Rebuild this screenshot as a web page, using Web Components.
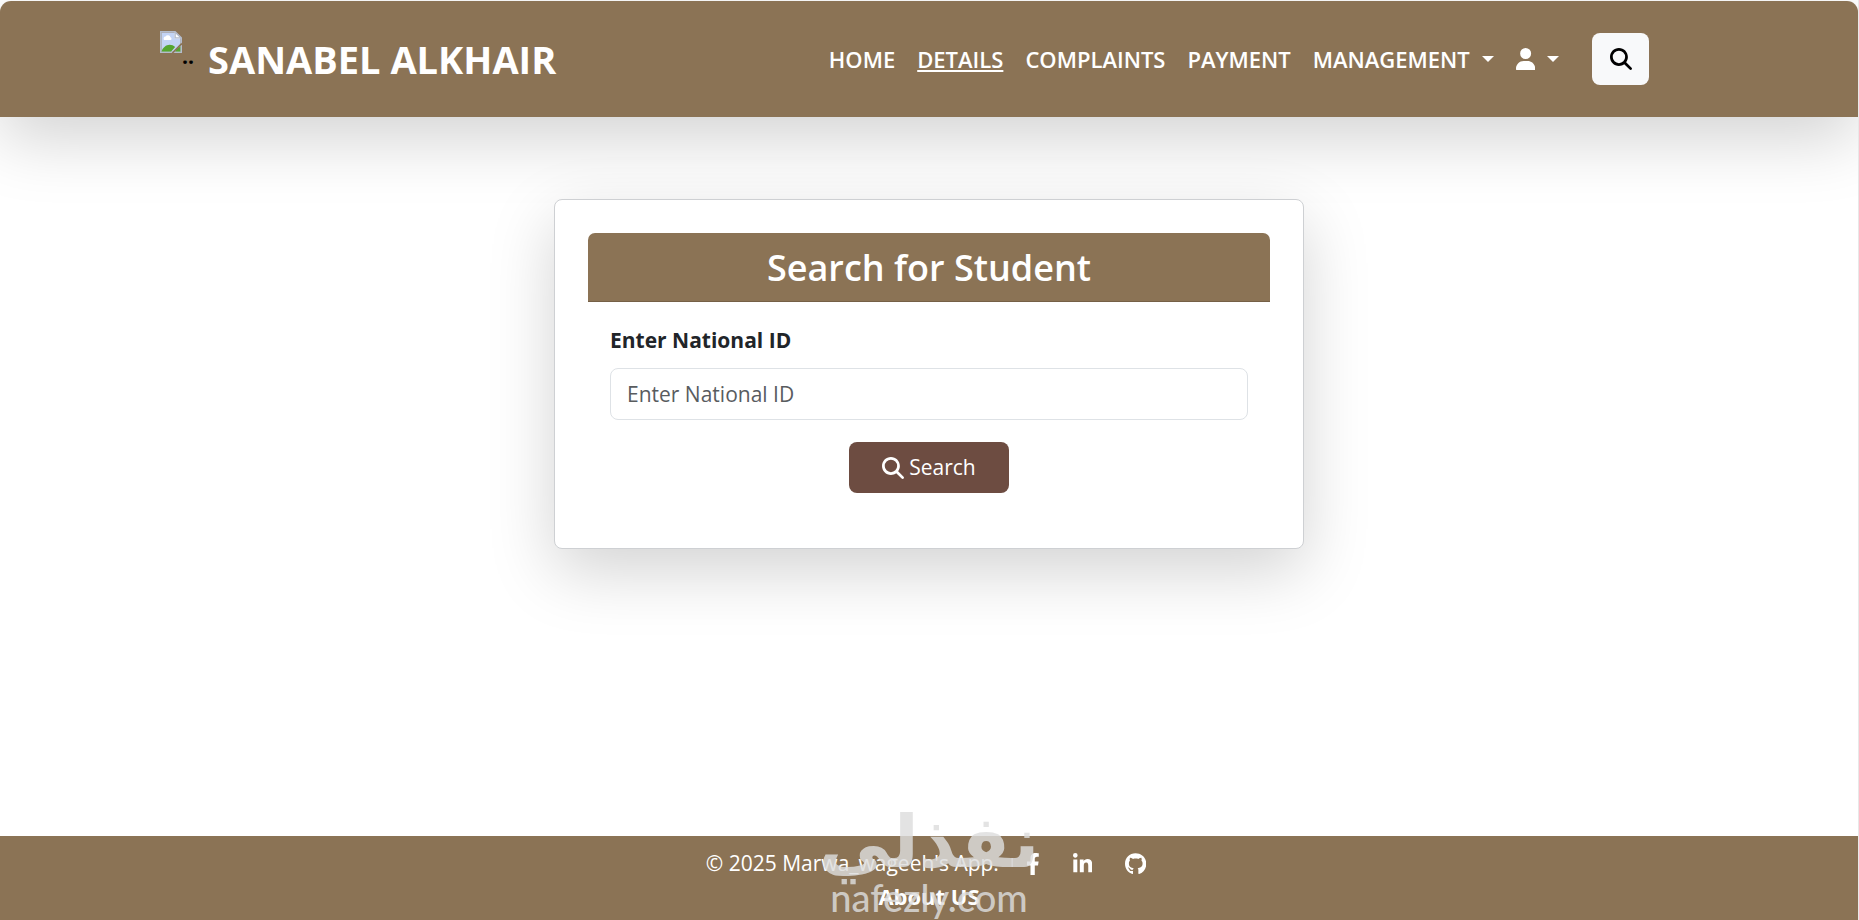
<!DOCTYPE html>
<html lang="en">
<head>
<meta charset="utf-8">
<meta name="viewport" content="width=device-width, initial-scale=1">
<title>Sanabel Alkhair</title>
<style>
    :root {
        --brown: #8b7355;
        --dark-brown: #6d4c41;
    }

    body {
        margin: 0;
        background: #fff;
        font-family: "Open Sans", "Noto Sans", sans-serif;
        font-size: 21px;
        line-height: 33px;
        color: #212529;
    }
</style>
</head>
<body>
<app-page>
    <site-header slot="header">
        <nav-link href="#home">HOME</nav-link>
        <nav-link href="#details" active>DETAILS</nav-link>
        <nav-link href="#complaints">COMPLAINTS</nav-link>
        <nav-link href="#payment">PAYMENT</nav-link>
        <nav-link href="#management" dropdown>MANAGEMENT</nav-link>
        <nav-link href="#account" dropdown label="Account"><app-icon name="user"></app-icon></nav-link>
    </site-header>
    <search-card>Search for Student</search-card>
    <site-footer slot="footer">© 2025 Marwa_wageeh's App.</site-footer>
</app-page>

<script>
const icons = {
    search: ['0 0 512 512', 'M416 208c0 45.9-14.9 88.3-40 122.7L502.6 457.4c12.5 12.5 12.5 32.8 0 45.3s-32.8 12.5-45.3 0L330.7 376c-34.4 25.2-76.8 40-122.7 40C93.1 416 0 322.9 0 208S93.1 0 208 0S416 93.1 416 208zM208 352a144 144 0 1 0 0-288 144 144 0 1 0 0 288z'],
    user: ['0 0 448 512', 'M224 256A128 128 0 1 0 224 0a128 128 0 1 0 0 256zM178.300 304C79.800 304 0 383.800 0 482.300V500c0 7 5 12 12 12H436c7 0 12-5 12-12V482.300C448 383.800 368.200 304 269.700 304z'],
    facebook: ['0 0 320 512', 'M279.14 288l14.22-92.66h-88.91v-60.13c0-25.35 12.42-50.06 52.24-50.06h40.42V6.26S260.43 0 225.36 0c-73.22 0-121.08 44.38-121.08 124.72v70.62H22.89V288h81.39v224h100.17V288z'],
    linkedin: ['0 0 448 512', 'M100.28 448H7.4V148.9h92.88zM53.79 108.1C24.09 108.1 0 83.5 0 53.8a53.79 53.79 0 0 1 107.58 0c0 29.7-24.1 54.3-53.79 54.3zM447.9 448h-92.68V302.4c0-34.7-.7-79.2-48.29-79.2-48.29 0-55.69 37.7-55.69 76.7V448h-92.78V148.9h89.08v40.8h1.3c12.4-23.5 42.69-48.3 87.88-48.3 94 0 111.28 61.9 111.28 142.3V448z'],
    github: ['0 0 496 512', 'M165.9 397.4c0 2-2.3 3.6-5.2 3.6-3.3.3-5.6-1.3-5.6-3.6 0-2 2.3-3.6 5.2-3.6 3-.3 5.6 1.3 5.6 3.6zm-31.1-4.5c-.7 2 1.3 4.3 4.3 4.9 2.6 1 5.6 0 6.2-2s-1.3-4.3-4.3-5.2c-2.6-.7-5.5.3-6.2 2.3zm44.2-1.7c-2.9.7-4.9 2.6-4.6 4.9.3 2 2.9 3.3 5.9 2.6 2.9-.7 4.9-2.6 4.6-4.6-.3-1.9-3-3.2-5.9-2.9zM244.8 8C106.1 8 0 113.3 0 252c0 110.9 69.8 205.8 169.5 239.2 12.8 2.3 17.3-5.6 17.3-12.1 0-6.2-.3-40.4-.3-61.4 0 0-70 15-84.7-29.8 0 0-11.4-29.1-27.8-36.6 0 0-22.9-15.7 1.6-15.4 0 0 24.9 2 38.6 25.8 21.9 38.6 58.6 27.5 72.9 20.9 2.3-16 8.8-27.1 16-33.7-55.9-6.2-112.3-14.3-112.3-110.5 0-27.5 7.6-41.3 23.6-58.9-2.6-6.5-11.1-33.3 2.6-67.9 20.9-6.5 69 27 69 27 20-5.6 41.5-8.5 62.8-8.5s42.8 2.9 62.8 8.5c0 0 48.1-33.6 69-27 13.7 34.7 5.2 61.4 2.6 67.9 16 17.7 25.8 31.5 25.8 58.9 0 96.5-58.9 104.2-114.8 110.5 9.2 7.9 17 22.9 17 46.4 0 33.7-.3 75.4-.3 83.6 0 6.5 4.6 14.4 17.3 12.1C428.2 457.8 496 362.9 496 252 496 113.3 383.5 8 244.8 8z'],
};

class AppIcon extends HTMLElement {
    connectedCallback() {
        if (this.shadowRoot) return;
        const [box, path] = icons[this.getAttribute('name')];
        this.attachShadow({ mode: 'open' }).innerHTML = `
            <style>
                :host { display: inline-flex; }
                svg { display: block; height: 22px; fill: currentColor; }
            </style>
            <svg viewBox="${box}" aria-hidden="true"><path d="${path}"/></svg>
        `;
    }
}

class NavLink extends HTMLElement {
    connectedCallback() {
        if (this.shadowRoot) return;
        const label = this.getAttribute('label');
        this.attachShadow({ mode: 'open' }).innerHTML = `
            <style>
                :host { display: block; }

                a {
                    display: flex;
                    align-items: center;
                    gap: 12px;
                    color: #fff;
                    font-size: 22px;
                    line-height: 32px;
                    font-weight: 600;
                    text-decoration: none;
                }

                :host([active]) a {
                    text-decoration: underline;
                    text-decoration-thickness: 2px;
                    text-underline-offset: 2px;
                }

                .caret {
                    display: none;
                    border: 6px solid transparent;
                    border-top-color: #fff;
                    border-bottom: 0;
                }

                :host([dropdown]) .caret { display: block; }
            </style>
            <a href="${this.getAttribute('href')}" ${label ? `aria-label="${label}"` : ''}><slot></slot><span class="caret"></span></a>
        `;
    }
}

const headerTemplate = document.createElement('template');
headerTemplate.innerHTML = `
    <style>
        :host { display: block; }

        header {
            display: flex;
            align-items: center;
            justify-content: space-between;
            min-height: 116px;
            box-sizing: border-box;
            padding: 0 209px 0 160px;
            background: var(--brown);
            border-radius: 11px 11px 0 0;
            box-shadow: 0 22px 66px rgba(0, 0, 0, .175);
        }

        .brand {
            display: flex;
            align-items: center;
            gap: 14px;
            color: #fff;
            font-size: 38px;
            line-height: 56px;
            font-weight: 700;
            text-decoration: none;
        }

        .logo {
            display: flex;
            align-items: flex-start;
            height: 56px;
            color: #000;
            font-size: 21px;
            line-height: 50px;
        }

        nav { display: flex; align-items: center; gap: 22px; }

        button {
            display: grid;
            place-items: center;
            width: 57px;
            height: 52px;
            margin-left: 11px;
            border: 0;
            border-radius: 8px;
            background: #f8f9fa;
            color: #000;
        }
    </style>
    <header>
        <a class="brand" href="#home">
            <span class="logo">
                <svg width="22" height="22" viewBox="0 0 16 16" aria-hidden="true">
                    <path fill="#c3d4f5" d="M1 1h10l4 4v10H1z"/>
                    <path fill="#fff" d="M3 6.500a1.500 1.500 0 0 1 1-2.500 2 2 0 0 1 3.600.5A1.200 1.200 0 0 1 8 6.500z"/>
                    <path fill="#55a630" d="M1 15c1-3 3.500-5 6-5 1.600 0 2.800.5 4 1.700L8 15zM12 13l3-2v4h-4z"/>
                    <path fill="#fff" d="M10.500 1v4.500H15z"/>
                    <path fill="none" stroke="#b4bccb" d="M.5 15.500V.5H11l4.500 4.500v10.500zM11 .5V5h4.500"/>
                    <path stroke="#8b7355" stroke-width="1.200" d="M9 16l7-7"/>
                </svg>..</span>
            SANABEL ALKHAIR
        </a>
        <nav>
            <slot></slot>
            <button type="button" aria-label="Search"><app-icon name="search"></app-icon></button>
        </nav>
    </header>
`;

class SiteHeader extends HTMLElement {
    connectedCallback() {
        if (this.shadowRoot) return;
        this.attachShadow({ mode: 'open' }).appendChild(headerTemplate.content.cloneNode(true));
    }
}

const cardTemplate = document.createElement('template');
cardTemplate.innerHTML = `
    <style>
        :host {
            display: block;
            box-sizing: border-box;
            width: 100%;
            max-width: 750px;
            padding: 33px;
            background: #fff;
            border: 1px solid #ced0d3;
            border-radius: 8px;
            box-shadow: 0 22px 66px rgba(0, 0, 0, .175);
        }

        h2 {
            margin: 0;
            padding: 12px 22px 10px;
            border-bottom: 1px solid #756047;
            border-radius: 7px 7px 0 0;
            background: var(--brown);
            color: #fff;
            font-size: 36px;
            line-height: 46px;
            font-weight: 600;
            text-align: center;
        }

        form {
            display: flex;
            flex-direction: column;
            padding: 22px;
        }

        label {
            margin-bottom: 11px;
            font-weight: 700;
        }

        input {
            height: 52px;
            box-sizing: border-box;
            padding: 8px 16px;
            border: 1px solid #dee2e6;
            border-radius: 8px;
            background: #fff;
            color: inherit;
            font: inherit;
        }

        input::placeholder { color: #595c5f; opacity: 1; }

        button {
            display: flex;
            align-items: center;
            align-self: center;
            gap: 5px;
            height: 51px;
            margin: 22px 0 0;
            padding: 0 33px;
            border: 0;
            border-radius: 8px;
            background: var(--dark-brown);
            color: #fff;
            font: inherit;
        }
    </style>
    <h2><slot></slot></h2>
    <form>
        <label for="national-id">Enter National ID</label>
        <input id="national-id" type="text" placeholder="Enter National ID">
        <button type="button"><app-icon name="search"></app-icon>Search</button>
    </form>
`;

class SearchCard extends HTMLElement {
    connectedCallback() {
        if (this.shadowRoot) return;
        this.attachShadow({ mode: 'open' }).appendChild(cardTemplate.content.cloneNode(true));
    }
}

const footerTemplate = document.createElement('template');
footerTemplate.innerHTML = `
    <style>
        :host { display: block; position: relative; }

        footer {
            display: flex;
            flex-direction: column;
            align-items: center;
            min-height: 84px;
            box-sizing: border-box;
            padding-top: 11px;
            background: var(--brown);
            color: #fff;
        }

        .row { display: flex; align-items: center; gap: 27px; padding-right: 6px; }
        .social { display: flex; align-items: center; gap: 33px; }
        a { color: #fff; text-decoration: none; }
        .social a { display: flex; }
        .about { font-size: 22px; font-weight: 700; }

        .watermark {
            position: absolute;
            left: 50%;
            bottom: 0;
            transform: translateX(-50%);
            display: flex;
            flex-direction: column;
            align-items: center;
            color: rgba(221, 221, 221, .82);
            pointer-events: none;
        }

        .watermark span:first-child {
            font: 700 72px/64px "DejaVu Sans", sans-serif;
        }

        .watermark span:last-child {
            font: 500 38px/46px Lato, sans-serif;
        }
    </style>
    <footer>
        <div class="row">
            <span><slot></slot></span>
            <div class="social">
                <a href="#facebook" aria-label="Facebook"><app-icon name="facebook"></app-icon></a>
                <a href="#linkedin" aria-label="LinkedIn"><app-icon name="linkedin"></app-icon></a>
                <a href="#github" aria-label="GitHub"><app-icon name="github"></app-icon></a>
            </div>
        </div>
        <a class="about" href="#about">About US</a>
    </footer>
    <div class="watermark">
        <span lang="ar" dir="rtl">نفذلي</span>
        <span>nafezly.com</span>
    </div>
`;

class SiteFooter extends HTMLElement {
    connectedCallback() {
        if (this.shadowRoot) return;
        this.attachShadow({ mode: 'open' }).appendChild(footerTemplate.content.cloneNode(true));
    }
}

const pageTemplate = document.createElement('template');
pageTemplate.innerHTML = `
    <style>
        :host {
            display: flex;
            flex-direction: column;
            min-height: 100vh;
            box-sizing: border-box;
            padding-top: 1px;
            border-right: 1px solid #e8e8e8;
            overflow: hidden;
        }

        main {
            flex: 1;
            display: flex;
            flex-direction: column;
            align-items: center;
            padding: 82px 22px;
        }

        ::slotted(search-card) { min-height: 350px; }
    </style>
    <slot name="header"></slot>
    <main><slot></slot></main>
    <slot name="footer"></slot>
`;

class AppPage extends HTMLElement {
    connectedCallback() {
        if (this.shadowRoot) return;
        this.attachShadow({ mode: 'open' }).appendChild(pageTemplate.content.cloneNode(true));
    }
}

customElements.define('app-icon', AppIcon);
customElements.define('nav-link', NavLink);
customElements.define('site-header', SiteHeader);
customElements.define('search-card', SearchCard);
customElements.define('site-footer', SiteFooter);
customElements.define('app-page', AppPage);
</script>
</body>
</html>
